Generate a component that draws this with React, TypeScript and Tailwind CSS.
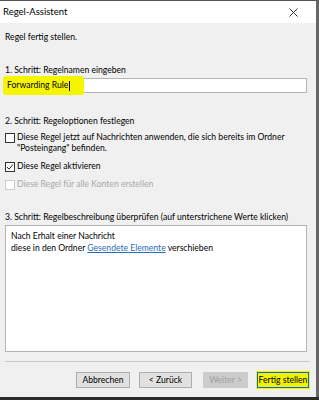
import React from "react";

const font = { fontFamily: 'Lato, "Noto Sans", sans-serif' };

function Check({ checked, disabled }: { checked?: boolean; disabled?: boolean }) {
  return (
    <span
      className={`mt-[1px] flex h-[10px] w-[10px] shrink-0 items-center justify-center border bg-white ${
        disabled ? "border-[#cccccc]" : "border-[#333333]"
      }`}
    >
      {checked && (
        <svg width="8" height="8" viewBox="0 0 8 8">
          <path d="M1 4 L3 6.2 L7 1.5" fill="none" stroke="#222" strokeWidth="1" />
        </svg>
      )}
    </span>
  );
}

export default function App() {
  return (
    <div className="h-[400px] w-[319px] overflow-hidden bg-[#2b2b2b] text-[8.6px] text-black" style={font}>
      <div className="flex h-[397px] flex-col border-t border-r-[3px] border-[#555555] border-r-[#666666] bg-[#f0f0f0]">
        <div className="flex h-[22px] shrink-0 items-center justify-between bg-white pl-[3px] pr-[18px] text-[9.5px]">
          <span>Regel-Assistent</span>
          <svg width="9" height="9" viewBox="0 0 9 9">
            <path d="M0.5 0.5 L8.5 8.5 M8.5 0.5 L0.5 8.5" stroke="#333" strokeWidth="1" />
          </svg>
        </div>
        <div className="flex flex-1 flex-col pl-[5px] pr-[9px]">
          <div className="mt-[8px] leading-[13px]">Regel fertig stellen.</div>
          <div className="mt-[20px] leading-[13px]">1. Schritt: Regelnamen eingeben</div>
          <div className="relative -ml-[2px] mt-[1px] flex h-[15px] items-center border border-[#b4b4b4] bg-white pl-[3px]">
            <span className="absolute -left-[1px] -top-[3px] h-[19px] w-[81px] rounded-[3px] bg-[#f5f500]" />
            <span className="relative">Forwarding Rule</span>
            <span className="relative ml-[1px] h-[10px] w-[1px] bg-black" />
          </div>
          <div className="mt-[22px] leading-[13px]">2. Schritt: Regeloptionen festlegen</div>
          <div className="mt-[4px] flex gap-[2px] leading-[11px]">
            <Check />
            <span>
              Diese Regel jetzt auf Nachrichten anwenden, die sich bereits im Ordner
              <br />
              "Posteingang" befinden.
            </span>
          </div>
          <div className="mt-[7px] flex gap-[2px] leading-[11px]">
            <Check checked />
            <span>Diese Regel aktivieren</span>
          </div>
          <div className="mt-[7px] flex gap-[2px] leading-[11px] text-[#a8a8a8]">
            <Check disabled />
            <span>Diese Regel für alle Konten erstellen</span>
          </div>
          <div className="mt-[21px] whitespace-nowrap leading-[13px]">3. Schritt: Regelbeschreibung überprüfen (auf unterstrichene Werte klicken)</div>
          <div className="mt-[1px] h-[127px] border border-[#b4b4b4] bg-white px-[5px] pt-[4px] leading-[12px]">
            <div>Nach Erhalt einer Nachricht</div>
            <div>
              diese in den Ordner{" "}
              <span className="text-[#2a6cb8] underline">Gesendete Elemente</span> verschieben
            </div>
          </div>
          <div className="-mr-[3px] mt-[9px] h-[2px] border-t border-[#c8c8c8] border-b-white" />
          <div className="-mr-[2px] mt-[9px] flex justify-end">
            <button className="h-[16px] w-[54px] border border-[#adadad] bg-[#e1e1e1] text-[8.6px]">Abbrechen</button>
            <button className="ml-[9px] h-[16px] w-[53px] border border-[#adadad] bg-[#e1e1e1] text-[8.6px]">&lt; Zurück</button>
            <button className="ml-[11px] h-[16px] w-[45px] border border-[#cccccc] bg-[#cccccc] text-[8.6px] text-[#a0a0a0]">Weiter &gt;</button>
            <button className="ml-[9px] h-[16px] w-[52px] border border-[#0a6bd6] bg-[#f2f200] text-[8.6px] shadow-[0_0_0_1px_#f2f200]">Fertig stellen</button>
          </div>
        </div>
      </div>
    </div>
  );
}
